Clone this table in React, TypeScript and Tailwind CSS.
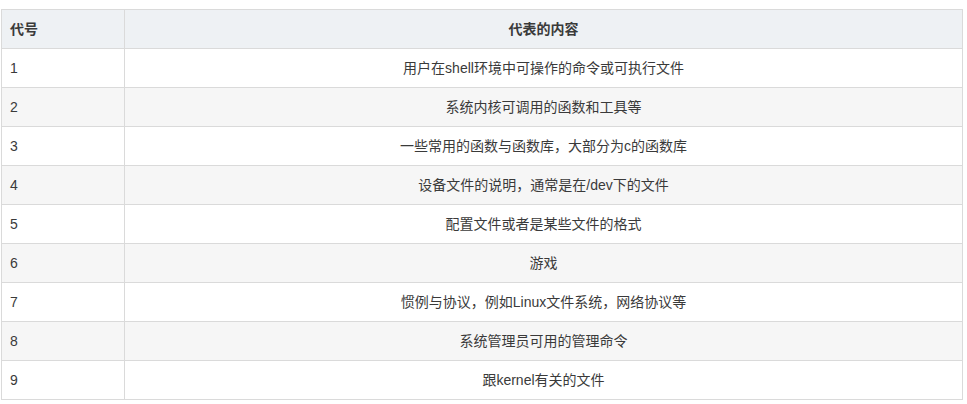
const rows: [string, string][] = [
  ['1', '用户在shell环境中可操作的命令或可执行文件'],
  ['2', '系统内核可调用的函数和工具等'],
  ['3', '一些常用的函数与函数库，大部分为c的函数库'],
  ['4', '设备文件的说明，通常是在/dev下的文件'],
  ['5', '配置文件或者是某些文件的格式'],
  ['6', '游戏'],
  ['7', '惯例与协议，例如Linux文件系统，网络协议等'],
  ['8', '系统管理员可用的管理命令'],
  ['9', '跟kernel有关的文件'],
];

export default function App() {
  return (
    <div
      className="min-h-[404px] w-[967px] bg-white pl-px pt-[9px] text-[14px] text-[#3a3a3a]"
      style={{ fontFamily: '"Liberation Sans", "Noto Sans CJK SC", sans-serif' }}
    >
      <table className="w-[962px] table-fixed border-collapse">
        <colgroup>
          <col className="w-[123px]" />
          <col />
        </colgroup>
        <thead>
          <tr className="h-[39px] bg-[#eef1f4]">
            <th className="border border-[#dadada] px-2 text-left font-bold">代号</th>
            <th className="border border-[#dadada] px-2 text-center font-bold">代表的内容</th>
          </tr>
        </thead>
        <tbody>
          {rows.map(([code, text], i) => (
            <tr key={code} className={`h-[39px] ${i % 2 === 1 ? 'bg-[#f6f6f6]' : 'bg-white'}`}>
              <td className="border border-[#dadada] px-2 text-left">{code}</td>
              <td className="border border-[#dadada] px-2 text-center">{text}</td>
            </tr>
          ))}
        </tbody>
      </table>
    </div>
  );
}
